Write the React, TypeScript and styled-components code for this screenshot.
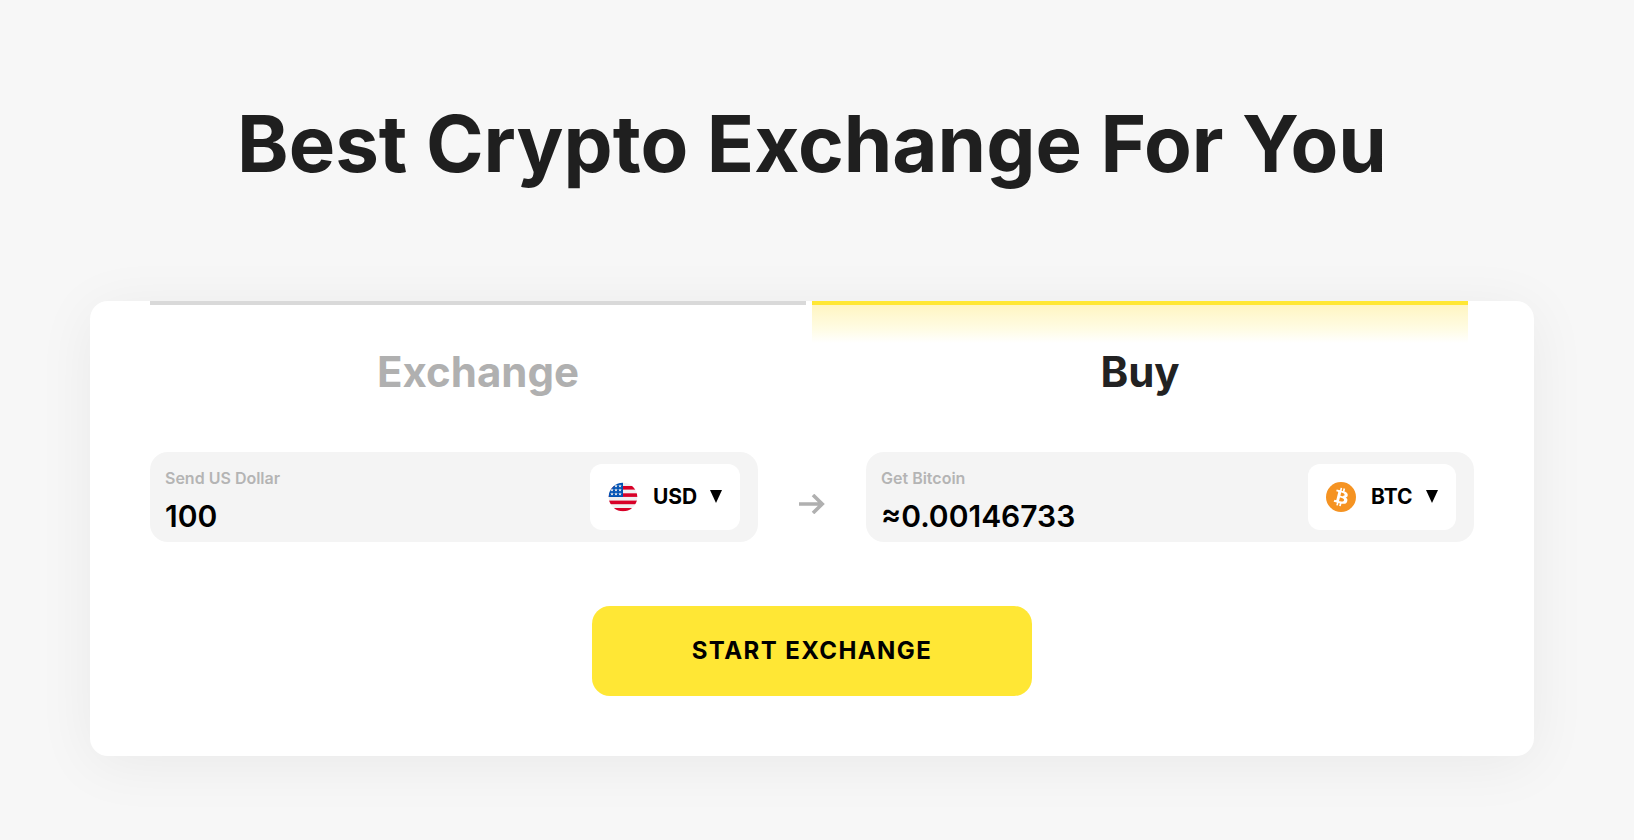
import React, { useState } from "react";
import styled, { createGlobalStyle } from "styled-components";

const GlobalStyle = createGlobalStyle`
  *, *::before, *::after { box-sizing: border-box; }
  body {
    margin: 0;
    background: #f7f7f7;
    font-family: Inter, "Liberation Sans", sans-serif;
    color: #000;
  }
  button, input, select { font-family: inherit; color: inherit; }
`;

const Page = styled.main`
  min-height: 100vh;
  padding: 97px 100px 80px 90px;
`;

const Title = styled.h1`
  margin: 0 0 110px;
  font-size: 78px;
  line-height: 94px;
  font-weight: 700;
  text-align: center;
  color: #1f1f1f;
`;

const Card = styled.form`
  display: flex;
  flex-direction: column;
  padding: 0 60px 60px;
  border-radius: 18px;
  background: #fff;
  box-shadow: 0 8px 60px rgba(0, 0, 0, 0.06);
`;

const Tabs = styled.div`
  display: flex;
`;

const Tab = styled.button<{ $active: boolean }>`
  flex: 1;
  height: 106px;
  margin: 0 6px 0 0;
  padding: 42px 0 10px;
  border: 0;
  border-top: 4px solid ${(p) => (p.$active ? "#ffe735" : "#d9d9d9")};
  background: ${(p) =>
    p.$active
      ? "linear-gradient(#fff5c2, #fffce4 24px, #fff 38px)"
      : "transparent"};
  color: ${(p) => (p.$active ? "#222" : "#b0b0b0")};
  font-size: 42px;
  line-height: 50px;
  font-weight: 700;
  cursor: pointer;
`;

const Fields = styled.div`
  display: flex;
  align-items: center;
  margin: 45px 0 64px;
`;

const Field = styled.div`
  flex: 1;
  min-width: 0;
  height: 90px;
  display: flex;
  align-items: center;
  padding: 0 18px 0 15px;
  border-radius: 18px;
  background: #f4f4f4;
`;

const Entry = styled.div`
  flex: 1;
  min-width: 0;
  display: flex;
  flex-direction: column;
  padding-top: 8px;
`;

const Caption = styled.label`
  font-size: 16px;
  line-height: 20px;
  font-weight: 600;
  color: #b4b4b4;
`;

const Amount = styled.input`
  width: 100%;
  height: 36px;
  margin-top: 10px;
  padding: 0;
  border: 0;
  outline: 0;
  background: transparent;
  font-size: 30px;
  font-weight: 600;
`;

const Picker = styled.div`
  height: 66px;
  display: flex;
  align-items: center;
  gap: 12px;
  padding: 0 18px;
  border-radius: 12px;
  background: #fff;
`;

const Currency = styled.select`
  appearance: none;
  min-width: 46px;
  padding: 0 0 2px 3px;
  border: 0;
  outline: 0;
  background: transparent;
  font-size: 21px;
  font-weight: 700;
  cursor: pointer;
`;

const Between = styled.div`
  width: 108px;
  display: flex;
  justify-content: center;
  padding-top: 14px;
`;

const Submit = styled.button`
  align-self: center;
  width: 440px;
  max-width: 100%;
  height: 90px;
  padding: 0 0 2px;
  border: 0;
  border-radius: 18px;
  background: #ffe735;
  font-size: 24px;
  font-weight: 700;
  letter-spacing: 0.06em;
  text-transform: uppercase;
  cursor: pointer;
`;

const stars = [
  [8, 4], [12, 4], [4, 8], [8, 8], [12, 8], [4, 12], [8, 12], [12, 12],
];

const FlagIcon = () => (
  <svg width="30" height="30" viewBox="0 0 30 30" aria-hidden="true">
    <clipPath id="flag-round">
      <circle cx="15" cy="15" r="14.3" />
    </clipPath>
    <g clipPath="url(#flag-round)">
      <rect width="30" height="30" fill="#f0f0f0" />
      {[4, 11.3, 18.6, 26].map((y) => (
        <rect key={y} y={y} width="30" height="3.6" fill="#d80027" />
      ))}
      <rect width="15" height="15" fill="#0052b4" />
      {stars.map(([x, y]) => (
        <path
          key={`${x}-${y}`}
          transform={`translate(${x} ${y})`}
          d="M0-1.700l.5 1.100h1.300l-1 .8.4 1.300L0 .8l-1.200.7.4-1.300-1-.8h1.300z"
          fill="#f0f0f0"
        />
      ))}
    </g>
  </svg>
);

const BitcoinIcon = () => (
  <svg width="30" height="30" viewBox="0 0 32 32" aria-hidden="true">
    <circle cx="16" cy="16" r="16" fill="#f59322" />
    <path
      fill="#fff"
      d="M23.189 14.02c.314-2.096-1.283-3.223-3.465-3.975l.708-2.84-1.728-.43-.69 2.765c-.454-.114-.92-.22-1.385-.326l.695-2.783L15.596 6l-.708 2.839c-.376-.086-.746-.17-1.104-.26l.002-.009-2.384-.595-.46 1.846s1.283.294 1.256.312c.7.175.826.638.805 1.006l-.806 3.235c.048.012.11.03.18.057l-.183-.045-1.13 4.532c-.086.212-.303.531-.793.41.018.025-1.256-.313-1.256-.313l-.858 1.978 2.25.561c.418.105.828.215 1.231.318l-.715 2.872 1.727.43.708-2.84c.472.127.93.245 1.378.357l-.706 2.828 1.728.43.715-2.866c2.948.558 5.164.333 6.097-2.333.752-2.146-.037-3.385-1.588-4.192 1.13-.26 1.98-1.003 2.207-2.538zm-3.95 5.538c-.533 2.147-4.148.986-5.32.695l.95-3.805c1.172.293 4.929.872 4.37 3.11zm.535-5.569c-.487 1.953-3.495.96-4.47.717l.86-3.45c.975.243 4.118.696 3.61 2.733z"
    />
  </svg>
);

const Triangle = () => (
  <svg width="12" height="14" viewBox="0 0 12 14" aria-hidden="true">
    <path d="M0 0h12L6 13z" />
  </svg>
);

const Arrow = () => (
  <svg width="26" height="20" viewBox="0 0 26 20" aria-hidden="true">
    <path
      d="M0 10h23M14 1l9.200 9-9.200 9"
      fill="none"
      stroke="#b0b0b0"
      strokeWidth="3.600"
    />
  </svg>
);

const tabs = ["Exchange", "Buy"];

export default function App() {
  const [active, setActive] = useState("Buy");
  const [sent, setSent] = useState("100");

  return (
    <>
      <GlobalStyle />
      <Page>
        <Title>Best Crypto Exchange For You</Title>
        <Card onSubmit={(e) => e.preventDefault()}>
          <Tabs role="tablist">
            {tabs.map((name) => (
              <Tab
                key={name}
                type="button"
                role="tab"
                aria-selected={name === active}
                $active={name === active}
                onClick={() => setActive(name)}
              >
                {name}
              </Tab>
            ))}
          </Tabs>
          <Fields>
            <Field>
              <Entry>
                <Caption htmlFor="send">Send US Dollar</Caption>
                <Amount
                  id="send"
                  value={sent}
                  onChange={(e) => setSent(e.target.value)}
                />
              </Entry>
              <Picker>
                <FlagIcon />
                <Currency aria-label="Send currency">
                  <option>USD</option>
                </Currency>
                <Triangle />
              </Picker>
            </Field>
            <Between>
              <Arrow />
            </Between>
            <Field>
              <Entry>
                <Caption htmlFor="get">Get Bitcoin</Caption>
                <Amount id="get" value="≈0.00146733" readOnly />
              </Entry>
              <Picker>
                <BitcoinIcon />
                <Currency aria-label="Get currency">
                  <option>BTC</option>
                </Currency>
                <Triangle />
              </Picker>
            </Field>
          </Fields>
          <Submit type="submit">Start exchange</Submit>
        </Card>
      </Page>
    </>
  );
}
